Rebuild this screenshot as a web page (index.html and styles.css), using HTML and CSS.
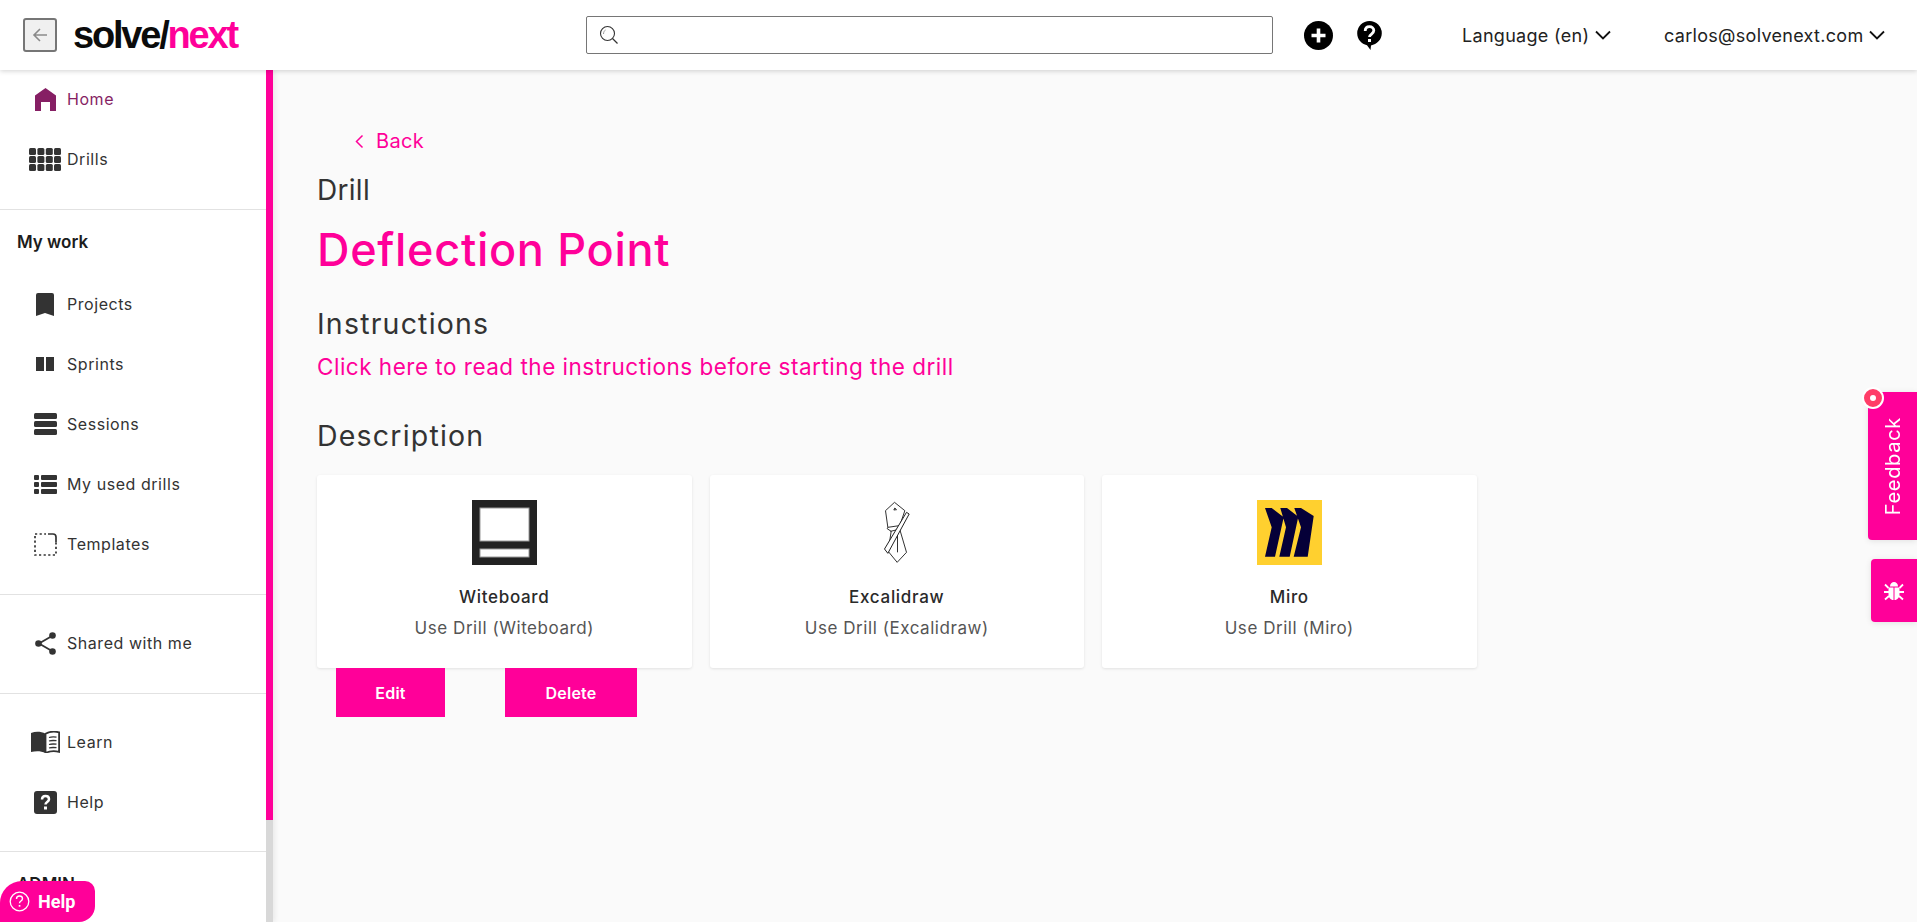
FILE: index.html
```html
<!DOCTYPE html>
<html lang="en">
<head>
    <meta charset="UTF-8">
    <meta name="viewport" content="width=device-width, initial-scale=1.0">
    <title>Drill - Deflection Point</title>
    <link rel="stylesheet" href="styles.css">
</head>
<body>
    <header class="topbar">
        <button type="button" class="back-square">
            <svg width="18" height="18" viewBox="0 0 18 18"><path d="M16 9H3M9 3L3 9l6 6" fill="none" stroke="#8a8a8a" stroke-width="1.6"/></svg>
        </button>
        <a class="logo">solve/<span>next</span></a>
        <label class="search">
            <svg width="20" height="20" viewBox="0 0 20 20"><circle cx="8.5" cy="8.5" r="7" fill="none" stroke="#333" stroke-width="1.1"/><path d="M13.5 13.5l5 5" stroke="#333" stroke-width="1.3"/><path d="M4.5 9c0-2 1-3.5 2-4" fill="none" stroke="#999" stroke-width="1"/></svg>
            <input type="text">
        </label>
        <svg class="top-plus" width="29" height="29" viewBox="0 0 29 29"><circle cx="14.5" cy="14.5" r="14.5" fill="#000"/><path d="M14.5 7.5v14M7.5 14.5h14" stroke="#fff" stroke-width="3.6"/></svg>
        <svg class="top-help" width="25" height="29" viewBox="0 0 25 29"><path d="M12.5 0a12.3 12.3 0 0 1 12.3 12.3c0 6.500-5 11-10.800 12.200L13.500 29l-3.500-4.800C4.500 23 .2 18.500.2 12.300A12.300 12.300 0 0 1 12.500 0z" fill="#000"/><path d="M8.200 10c0-2.800 1.900-4.300 4.300-4.300s4.300 1.500 4.300 3.900c0 3.400-4.300 3.400-4.300 6.400" fill="none" stroke="#fff" stroke-width="2.800"/><rect x="11" y="18" width="3" height="3" fill="#fff"/></svg>
        <a class="top-menu lang">Language (en)
            <svg width="16" height="10" viewBox="0 0 16 10"><path d="M1 1.500l7 7 7-7" fill="none" stroke="#111" stroke-width="1.800"/></svg>
        </a>
        <a class="top-menu user">carlos@solvenext.com
            <svg width="16" height="10" viewBox="0 0 16 10"><path d="M1 1.500l7 7 7-7" fill="none" stroke="#111" stroke-width="1.800"/></svg>
        </a>
    </header>

    <div class="layout">
        <aside class="sidebar">
            <nav class="side-nav">
                <section class="side-section first">
                    <a class="nav-item active">
                        <span class="nav-icon"><svg width="21" height="23" viewBox="0 0 21 23"><path d="M10.500 0L21 7.500V23h-6v-9H6v9H0V7.500z" fill="#861f64"/></svg></span>
                        Home
                    </a>
                    <a class="nav-item">
                        <span class="nav-icon"><svg width="32" height="23" viewBox="0 0 32 23" fill="#333"><rect x="0" y="0" width="7" height="7" rx="1.500"/><rect x="8.400" y="0" width="7" height="7" rx="1.500"/><rect x="16.800" y="0" width="7" height="7" rx="1.500"/><rect x="25" y="0" width="7" height="7" rx="1.500"/><rect x="0" y="8" width="7" height="7" rx="1.500"/><rect x="8.400" y="8" width="7" height="7" rx="1.500"/><rect x="16.800" y="8" width="7" height="7" rx="1.500"/><rect x="25" y="8" width="7" height="7" rx="1.500"/><rect x="0" y="16" width="7" height="7" rx="1.500"/><rect x="8.400" y="16" width="7" height="7" rx="1.500"/><rect x="16.800" y="16" width="7" height="7" rx="1.500"/><rect x="25" y="16" width="7" height="7" rx="1.500"/></svg></span>
                        Drills
                    </a>
                </section>
                <section class="side-section">
                    <h3 class="side-title">My work</h3>
                    <a class="nav-item">
                        <span class="nav-icon"><svg width="18" height="23" viewBox="0 0 18 23"><path d="M2 0h14a2 2 0 0 1 2 2v21l-9-3-9 3V2a2 2 0 0 1 2-2z" fill="#333"/></svg></span>
                        Projects
                    </a>
                    <a class="nav-item">
                        <span class="nav-icon"><svg width="18" height="14" viewBox="0 0 18 14" fill="#333"><rect width="8" height="14"/><rect x="10" width="8" height="14"/></svg></span>
                        Sprints
                    </a>
                    <a class="nav-item">
                        <span class="nav-icon"><svg width="23" height="22" viewBox="0 0 23 22" fill="#333"><rect width="23" height="6" rx="1.500"/><rect y="8" width="23" height="6" rx="1.500"/><rect y="16" width="23" height="6" rx="1.500"/></svg></span>
                        Sessions
                    </a>
                    <a class="nav-item">
                        <span class="nav-icon"><svg width="23" height="19" viewBox="0 0 23 19" fill="#333"><rect width="5" height="5" rx="1"/><rect x="7" width="16" height="5" rx="1"/><rect y="7" width="5" height="5" rx="1"/><rect x="7" y="7" width="16" height="5" rx="1"/><rect y="14" width="5" height="5" rx="1"/><rect x="7" y="14" width="16" height="5" rx="1"/></svg></span>
                        My used drills
                    </a>
                    <a class="nav-item">
                        <span class="nav-icon"><svg width="23" height="23" viewBox="0 0 23 23"><path d="M1 3V22H22V9" fill="none" stroke="#333" stroke-width="1.700" stroke-dasharray="2.200 2.400"/><path d="M1 1H12" fill="none" stroke="#333" stroke-width="1.700" stroke-dasharray="2.200 2.400"/><path d="M14 1h5a3 3 0 0 1 3 3v5" fill="none" stroke="#333" stroke-width="1.700"/></svg></span>
                        Templates
                    </a>
                </section>
                <section class="side-section">
                    <a class="nav-item">
                        <span class="nav-icon"><svg width="21" height="23" viewBox="0 0 21 23"><path d="M17 4L4 11.500 17 19" fill="none" stroke="#333" stroke-width="1.800"/><circle cx="17.500" cy="3.500" r="3.300" fill="#333"/><circle cx="3.500" cy="11.500" r="3.300" fill="#333"/><circle cx="17.500" cy="19.500" r="3.300" fill="#333"/></svg></span>
                        Shared with me
                    </a>
                </section>
                <section class="side-section help-group">
                    <a class="nav-item">
                        <span class="nav-icon"><svg width="29" height="22" viewBox="0 0 29 22"><path d="M0 2c5-1.800 10-1.500 14.500.8V22C10 20 5 20 0 21z" fill="#333"/><path d="M14.500 2.800c4-2.300 9-2.600 13.600-1.500v19.500c-4.500-1-9.500-.8-13.600 1.200z" fill="#fff" stroke="#333" stroke-width="1.800"/><path d="M18 6.500c2-.7 5-.7 7.500-.4M18 10c2-.6 5-.6 7.500-.3M18 13.500c2-.6 5-.6 7.500-.3M18 17c2-.6 5-.6 7.500-.3" fill="none" stroke="#333" stroke-width="1.300"/></svg></span>
                        Learn
                    </a>
                    <a class="nav-item">
                        <span class="nav-icon"><svg width="23" height="23" viewBox="0 0 23 23"><rect width="23" height="23" rx="3" fill="#333"/><path d="M8 8.500c0-2.300 1.500-3.500 3.500-3.500s3.500 1.200 3.500 3.200c0 2.800-3.500 2.800-3.500 5.300" fill="none" stroke="#fff" stroke-width="2.500"/><rect x="10" y="15.500" width="3" height="3" fill="#fff"/></svg></span>
                        Help
                    </a>
                </section>
                <section class="side-section">
                    <h3 class="side-title">ADMIN</h3>
                </section>
            </nav>
            <div class="side-scroll"><div class="side-thumb"></div></div>
        </aside>

        <main class="content">
            <a class="back-link">
                <svg width="11" height="15" viewBox="0 0 11 15"><path d="M8.500 1.500L2.500 7.500l6 6" fill="none" stroke="#ff0099" stroke-width="1.500"/></svg>
                Back
            </a>
            <h2 class="kicker">Drill</h2>
            <h1 class="drill-name">Deflection Point</h1>
            <h2 class="sub-head">Instructions</h2>
            <a class="read-link">Click here to read the instructions before starting the drill</a>
            <h2 class="sub-head desc">Description</h2>

            <div class="card-row">
                <div class="tool-card">
                    <svg class="tool-icon" width="65" height="65" viewBox="0 0 65 65"><rect width="65" height="65" fill="#222"/><rect x="8" y="8" width="49" height="33" fill="#fff" stroke="#999" stroke-width="1"/><rect x="8" y="49" width="49" height="8" fill="#fff" stroke="#999" stroke-width="1"/></svg>
                    <div class="tool-name">Witeboard</div>
                    <div class="tool-use">Use Drill (Witeboard)</div>
                </div>
                <div class="tool-card">
                    <svg class="tool-icon" width="65" height="65" viewBox="-19.500 18 195 195"><path d="M72 25L103 50 86 100 108 175 80 205 53 172 62 112 50 104 52 100 45 50zM52 100L86 95M60 112L85 106M70 48L73 42 78 47zM81 125V175" fill="none" stroke="#111" stroke-width="2.600"/><path d="M108 55L116 60 52 178 42 165z" fill="#fff" stroke="#111" stroke-width="2.800"/></svg>
                    <div class="tool-name">Excalidraw</div>
                    <div class="tool-use">Use Drill (Excalidraw)</div>
                </div>
                <div class="tool-card">
                    <svg class="tool-icon" width="65" height="65" viewBox="0 0 65 65"><rect width="65" height="65" fill="#ffd02f"/><path d="M8 8H14.700L26.700 17.300 18 56.700H8L14.700 27.300zM23.300 8H30L41.300 16.700 32.700 56.700H22.300L29 27.300zM37.300 8H44L56.700 16 50.700 56.700H36.700L44 27.300z" fill="#050038"/></svg>
                    <div class="tool-name">Miro</div>
                    <div class="tool-use">Use Drill (Miro)</div>
                </div>
            </div>
            <div class="card-actions">
                <button type="button" class="pink-btn edit">Edit</button>
                <button type="button" class="pink-btn delete">Delete</button>
            </div>
        </main>
    </div>

    <a class="help-pill">
        <svg width="21" height="21" viewBox="0 0 21 21"><circle cx="10.500" cy="10.500" r="9.300" fill="none" stroke="#fff" stroke-width="1.300"/><path d="M7.500 8c0-2 1.300-3 3-3s3 1 3 2.700c0 2.300-3 2.300-3 4.500" fill="none" stroke="#fff" stroke-width="1.400"/><rect x="9.700" y="14" width="1.700" height="1.700" fill="#fff"/></svg>
        Help
    </a>
    <div class="feedback-tab">
        <span class="feedback-dot"></span>
        <span class="feedback-label">Feedback</span>
    </div>
    <div class="bug-tab">
        <svg width="20" height="20" viewBox="0 0 20 20" fill="#fff"><path d="M6 5.500C6 2.500 8 1 10 1s4 1.500 4 4.500z"/><path d="M4.500 6.500h5V19C6.500 19 4.500 16.500 4.500 13zM10.500 6.500h5V13c0 3.500-2 6-5 6z"/><path d="M1 3.500l3.500 3.500M19 3.500L15.500 7M0 11h5M20 11h-5M1 18.500l4-3.500M19 18.500l-4-3.500" stroke="#fff" stroke-width="1.800"/></svg>
    </div>
</body>
</html>
```

FILE: styles.css
```css
:root {
    --pink: #ff0099;
    --text-color: #333333;
    --bg-color: #fafafa;
    --line-color: #e2e2e2;
}

* {
    box-sizing: border-box;
}

html,
body {
    height: 100%;
    overflow: hidden;
}

body {
    margin: 0;
    background-color: var(--bg-color);
    color: var(--text-color);
    font-family: 'Inter', 'Liberation Sans', sans-serif;
}

.topbar {
    position: relative;
    z-index: 2;
    display: flex;
    align-items: center;
    height: 70px;
    padding-left: 23px;
    background-color: #ffffff;
    box-shadow: 0 1px 5px rgba(0, 0, 0, 0.18);
}

.back-square {
    display: flex;
    align-items: center;
    justify-content: center;
    width: 34px;
    height: 34px;
    padding: 0;
    background-color: #f0f0f0;
    border: 2px solid #767676;
    border-radius: 3px;
}

.logo {
    width: 163px;
    margin-left: 16px;
    font-family: 'Liberation Sans', sans-serif;
    font-size: 38px;
    font-weight: bold;
    letter-spacing: -2.2px;
    color: #0b0b0b;
    white-space: nowrap;
}

.logo span {
    color: var(--pink);
}

.search {
    display: flex;
    align-items: center;
    gap: 6px;
    width: 687px;
    height: 38px;
    margin-left: 350px;
    padding-left: 12px;
    background-color: #ffffff;
    border: 1px solid #767676;
    border-radius: 2px;
}

.search input {
    flex: 1;
    border: none;
    outline: none;
    background: none;
}

.top-plus {
    margin-left: 31px;
}

.top-help {
    margin-left: 24px;
}

.top-menu {
    display: flex;
    align-items: center;
    gap: 6px;
    font-size: 18px;
    letter-spacing: 0.3px;
    color: #222222;
    white-space: nowrap;
}

.lang {
    margin-left: 80px;
    width: 202px;
}

.layout {
    display: flex;
    height: calc(100% - 70px);
}

.sidebar {
    display: flex;
    width: 273px;
    flex-shrink: 0;
    background-color: #ffffff;
    box-shadow: 2px 0 5px rgba(0, 0, 0, 0.07);
}

.side-nav {
    width: 266px;
    flex-shrink: 0;
    overflow: hidden;
}

.side-scroll {
    width: 7px;
    background-color: #d8d8d8;
}

.side-thumb {
    height: 750px;
    background-color: var(--pink);
}

.side-section {
    padding: 18px 0 20px;
    border-bottom: 1px solid var(--line-color);
}

.side-section.first {
    margin-top: -1px;
    padding-top: 0;
}

.side-section.help-group {
    padding-bottom: 19px;
}

.side-title {
    margin: 0;
    padding: 2px 0 20px 17px;
    font-size: 17px;
    line-height: 24px;
    font-weight: 600;
    color: #1c1c1c;
}

.nav-item {
    display: flex;
    align-items: center;
    height: 60px;
    padding-left: 29px;
    font-size: 16px;
    letter-spacing: 0.55px;
    color: var(--text-color);
}

.nav-item.active {
    color: #861f64;
}

.nav-icon {
    display: flex;
    align-items: center;
    justify-content: center;
    width: 32px;
    margin-right: 6px;
}

.content {
    flex: 1;
    padding: 55px 0 0 44px;
}

.back-link {
    display: flex;
    align-items: center;
    gap: 11px;
    margin-left: 37px;
    height: 32px;
    font-size: 20px;
    letter-spacing: 0.3px;
    color: var(--pink);
}

.kicker,
.sub-head {
    margin: 0;
    font-weight: 400;
    line-height: 40px;
    color: var(--text-color);
}

.kicker {
    margin-top: 13px;
    font-size: 28px;
    letter-spacing: 0.3px;
}

.drill-name {
    margin: 7px 0 0;
    font-size: 45px;
    line-height: 66px;
    font-weight: 500;
    letter-spacing: 0.7px;
    color: var(--pink);
}

.sub-head {
    margin-top: 21px;
    font-size: 28.5px;
    letter-spacing: 1.2px;
}

.read-link {
    display: block;
    margin-top: 7px;
    font-size: 22.5px;
    line-height: 32px;
    letter-spacing: 0.5px;
    color: var(--pink);
}

.sub-head.desc {
    margin-top: 33px;
}

.card-row {
    display: flex;
    gap: 18px;
    margin-top: 19px;
}

.tool-card {
    display: flex;
    flex-direction: column;
    align-items: center;
    width: 374.5px;
    height: 193px;
    padding-top: 25px;
    background-color: #ffffff;
    border-radius: 3px;
    box-shadow: 0 1px 3px rgba(0, 0, 0, 0.1);
}

.tool-name {
    margin-top: 21px;
    font-size: 17px;
    line-height: 22px;
    font-weight: 500;
    letter-spacing: 0.7px;
    color: #2a2a2a;
}

.tool-use {
    margin-top: 9px;
    font-size: 17px;
    line-height: 22px;
    letter-spacing: 0.55px;
    color: #555555;
}

.card-actions {
    display: flex;
    gap: 60px;
    padding-left: 19px;
}

.pink-btn {
    height: 49px;
    border: none;
    background-color: var(--pink);
    color: #ffffff;
    font-family: inherit;
    font-size: 16px;
    font-weight: 600;
    letter-spacing: 0.2px;
}

.pink-btn.edit {
    width: 109px;
}

.pink-btn.delete {
    width: 132px;
}

.help-pill {
    position: fixed;
    left: 0;
    bottom: 0;
    z-index: 3;
    display: flex;
    align-items: center;
    gap: 8px;
    width: 95px;
    height: 41px;
    padding-left: 9px;
    background-color: var(--pink);
    border-radius: 22px 10px 16px 0;
    font-family: 'Roboto', sans-serif;
    font-size: 18px;
    font-weight: 700;
    color: #ffffff;
}

.feedback-tab {
    position: fixed;
    right: 0;
    top: 392px;
    display: flex;
    align-items: center;
    justify-content: center;
    width: 49px;
    height: 148px;
    background-color: var(--pink);
    border-radius: 4px 0 0 4px;
    box-shadow: 0 1px 6px rgba(0, 0, 0, 0.1);
}

.feedback-label {
    writing-mode: vertical-rl;
    transform: rotate(180deg);
    font-size: 20px;
    letter-spacing: 0.7px;
    color: #ffffff;
}

.feedback-dot {
    position: absolute;
    left: -6px;
    top: -5px;
    width: 22px;
    height: 22px;
    background-color: #ff3d68;
    border: 2px solid #ffffff;
    border-radius: 50%;
}

.feedback-dot::after {
    content: '';
    position: absolute;
    left: 6px;
    top: 6px;
    width: 6px;
    height: 6px;
    background-color: #ffffff;
    border-radius: 50%;
}

.bug-tab {
    position: fixed;
    right: 0;
    top: 559px;
    display: flex;
    align-items: center;
    justify-content: center;
    width: 46px;
    height: 63px;
    background-color: var(--pink);
    border-radius: 4px 0 0 4px;
    box-shadow: 0 1px 6px rgba(0, 0, 0, 0.1);
}
```
